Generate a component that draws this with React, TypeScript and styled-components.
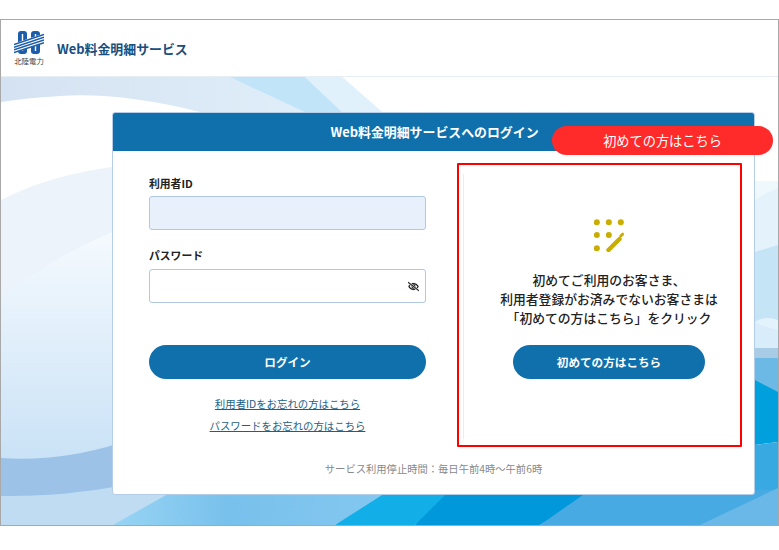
import React from 'react';
import styled, { createGlobalStyle } from 'styled-components';
import { FaRegEyeSlash } from 'react-icons/fa';

const FONT = '"Noto Sans CJK JP", "Noto Sans", sans-serif';

const Global = createGlobalStyle`
  html, body {
    margin: 0;
    background: #fff;
    font-family: ${FONT};
  }
  * {
    box-sizing: border-box;
  }
`;

const LogoMark = () => (
  <svg width="30" height="25" viewBox="0 0 30 25">
    <rect x="4" y="1" width="9" height="23" rx="3" fill="#1b5cab" />
    <rect x="17" y="1" width="9" height="23" rx="3" fill="#1b5cab" />
    <path d="M8.5 4v17M21.5 4v17" stroke="#fff" strokeWidth="1.4" />
    <path d="M0 13.5 30 3.5V13L0 23z" fill="#fff" />
    <g stroke="#1b5cab" strokeWidth="1.5">
      <path d="M0 14.5 30 4.5" />
      <path d="M0 17.2 30 7.2" />
      <path d="M0 19.9 30 9.9" />
      <path d="M0 22.6 30 12.6" />
    </g>
  </svg>
);

const StartIcon = () => (
  <svg width="30" height="33" viewBox="594 219 30 33">
    <g fill="#c9ae00">
      <circle cx="596.8" cy="222.3" r="3" />
      <circle cx="608.8" cy="222.3" r="3" />
      <circle cx="620.8" cy="222.3" r="3" />
      <circle cx="596.8" cy="235" r="3" />
      <circle cx="608.8" cy="235" r="3" />
      <circle cx="596.8" cy="248.3" r="3" />
    </g>
    <path d="M608.5 250 619.5 239" stroke="#c9ae00" strokeWidth="4.4" strokeLinecap="round" />
    <path d="M620.8 236 622.6 234.2" stroke="#c9ae00" strokeWidth="3" strokeLinecap="round" />
  </svg>
);

const Backdrop = () => (
  <BackdropSvg viewBox="1 77 777 448" preserveAspectRatio="none">
    <defs>
      <linearGradient id="topBand" x1="0" x2="1" y1="0" y2="0">
        <stop offset="0" stopColor="#d5e2f2" />
        <stop offset="1" stopColor="#e2f1fb" />
      </linearGradient>
      <linearGradient id="lowerFade" x1="0" x2="0" y1="0" y2="1">
        <stop offset="0" stopColor="#f5fafe" />
        <stop offset="1" stopColor="#c8e1f6" />
      </linearGradient>
      <linearGradient id="midStreak" x1="0" x2="1" y1="0" y2="0">
        <stop offset="0" stopColor="#98d4f4" />
        <stop offset="0.4" stopColor="#78c1ec" />
        <stop offset="1" stopColor="#85c8f0" />
      </linearGradient>
    </defs>
    <rect x="1" y="77" width="777" height="448" fill="#fff" />
    <path d="M1 77H342L382 112H200Q120 92 60 96Q25 98 1 102Z" fill="url(#topBand)" />
    <path d="M230 77H305L342 112H305Z" fill="#c2e4f8" />
    <path d="M305 77H342L382 112H342Z" fill="#e0f1fb" />
    <path d="M1 200Q50 175 112 167V300H1Z" fill="#edf3fa" />
    <path d="M1 298Q50 258 112 232V300H1Z" fill="#e5f0f9" />
    <path d="M1 298Q50 258 112 232H200V470H1Z" fill="url(#lowerFade)" />
    <path d="M1 458Q60 462 120 443L120 490Q60 497 1 496Z" fill="#9cc3e7" />
    <path d="M1 496Q60 497 120 486L200 480V525H1Z" fill="#bfdcf3" />
    <path d="M755 181L778 181V300H755Z" fill="#eef8fd" />
    <path d="M755 200Q765 193 778 188V330H755Z" fill="#e3f2fb" />
    <path d="M755 252L778 245V320Q765 315 755 322Z" fill="#c5e5f7" />
    <path d="M755 322Q765 328 778 330V350H755Z" fill="#d8ecf9" />
    <path d="M755 348H778V360H755Z" fill="#a8cbe6" />
    <path d="M755 358H778V392H755Z" fill="#6db9e6" />
    <path d="M755 380L778 392V442L755 445Z" fill="#00a0dc" />
    <path d="M755 445L778 442V525H755Z" fill="#38a9e1" />
    <path d="M113 525L175 490H400L335 525Z" fill="url(#midStreak)" />
    <path d="M335 525L390 490H460L415 525Z" fill="#12aee8" />
    <path d="M415 525L450 490H600L540 525Z" fill="#0098da" />
    <path d="M540 525L590 490H778V525Z" fill="#48aae2" />
    <path d="M700 525L778 488V525Z" fill="#6ab8e8" />
  </BackdropSvg>
);

export default function App() {
  return (
    <>
      <Global />
      <Frame>
        <Header>
          <Logo>
            <LogoMark />
            <LogoName>北陸電力</LogoName>
          </Logo>
          <ServiceName>Web料金明細サービス</ServiceName>
        </Header>
        <Stage>
          <Backdrop />
          <Card>
            <CardHead>Web料金明細サービスへのログイン</CardHead>
            <CardBody>
              <Form>
                <Label>利用者ID</Label>
                <Input $filled />
                <Label $spaced>パスワード</Label>
                <Input>
                  <FaRegEyeSlash size={11} color="#000" stroke="#000" strokeWidth={20} />
                </Input>
                <LoginButton>ログイン</LoginButton>
                <Links>
                  <ForgotLink>利用者IDをお忘れの方はこちら</ForgotLink>
                  <ForgotLink>パスワードをお忘れの方はこちら</ForgotLink>
                </Links>
              </Form>
              <FirstTime>
                <StartIcon />
                <Lead>
                  初めてご利用のお客さま、
                  <br />
                  利用者登録がお済みでないお客さまは
                  <br />
                  「初めての方はこちら」をクリック
                </Lead>
                <StartButton>初めての方はこちら</StartButton>
              </FirstTime>
            </CardBody>
            <Notice>サービス利用停止時間：毎日午前4時～午前6時</Notice>
            <Highlight />
            <Pill>初めての方はこちら</Pill>
          </Card>
        </Stage>
      </Frame>
    </>
  );
}

const Frame = styled.div`
  width: 779px;
  height: 507px;
  margin-top: 19px;
  border: 1px solid #a8a8a8;
  display: flex;
  flex-direction: column;
`;

const Header = styled.header`
  height: 57px;
  padding-left: 13px;
  background: #fff;
  border-bottom: 1px solid #e6edf5;
  display: flex;
  align-items: center;
  gap: 13px;
`;

const Logo = styled.div`
  width: 30px;
  display: flex;
  flex-direction: column;
  align-items: center;
`;

const LogoName = styled.span`
  margin-top: 1px;
  font-size: 7.4px;
  line-height: 10px;
  color: #444;
  white-space: nowrap;
`;

const ServiceName = styled.div`
  font-size: 12.9px;
  font-weight: 700;
  color: #17507e;
`;

const Stage = styled.main`
  position: relative;
  flex: 1;
  padding: 35px 23px 30px 111px;
`;

const BackdropSvg = styled.svg`
  position: absolute;
  left: 0;
  top: 0;
  width: 100%;
  height: 100%;
`;

const Card = styled.section`
  position: relative;
  height: 383px;
  background: #fff;
  border: 1px solid #b4cde8;
  border-radius: 3px;
  display: flex;
  flex-direction: column;
`;

const CardHead = styled.h1`
  height: 38px;
  margin: 0;
  padding-left: 2px;
  background: #1070ab;
  border-radius: 2px 2px 0 0;
  color: #fff;
  font-size: 12.9px;
  font-weight: 700;
  line-height: 38px;
  text-align: center;
`;

const CardBody = styled.div`
  padding: 23px 0 0 36px;
  display: flex;
  gap: 37px;
`;

const Form = styled.div`
  width: 277px;
  display: flex;
  flex-direction: column;
`;

const Label = styled.div<{ $spaced?: boolean }>`
  margin-top: ${(p) => (p.$spaced ? '16px' : '0')};
  margin-bottom: ${(p) => (p.$spaced ? '5px' : '4px')};
  font-size: 10.8px;
  font-weight: 700;
  line-height: 18px;
  color: #222;
`;

const Input = styled.div<{ $filled?: boolean }>`
  height: 34px;
  padding-right: 6px;
  background: ${(p) => (p.$filled ? '#e8f0fc' : '#fff')};
  border: 1px solid #b0c8e4;
  border-radius: 3px;
  display: flex;
  align-items: center;
  justify-content: flex-end;
`;

const PrimaryButton = styled.button`
  height: 34px;
  padding: 0;
  border: 0;
  border-radius: 17px;
  background: #1070ab;
  color: #fff;
  font-family: ${FONT};
  font-size: 11.6px;
  font-weight: 700;
`;

const LoginButton = styled(PrimaryButton)`
  margin-top: 42px;
`;

const StartButton = styled(PrimaryButton)`
  width: 192px;
  margin-top: 18px;
`;

const Links = styled.div`
  margin-top: 14px;
  display: flex;
  flex-direction: column;
  align-items: center;
`;

const ForgotLink = styled.a`
  font-size: 10.4px;
  line-height: 22px;
  color: #1d5f85;
  text-decoration: underline;
`;

const FirstTime = styled.div`
  flex: 1;
  height: 265px;
  padding-top: 45px;
  border-left: 1px solid #e8eef5;
  display: flex;
  flex-direction: column;
  align-items: center;
`;

const Lead = styled.p`
  margin: 18px 0 0;
  font-size: 12.8px;
  font-weight: 500;
  line-height: 19px;
  text-align: center;
  color: #222;
`;

const Notice = styled.div`
  margin-top: 21px;
  font-size: 10.3px;
  line-height: 18px;
  text-align: center;
  color: #888;
`;

const Highlight = styled.div`
  position: absolute;
  left: 344px;
  top: 50px;
  width: 285px;
  height: 284px;
  border: 2px solid #f00;
  border-radius: 1px;
`;

const Pill = styled.div`
  position: absolute;
  left: 439px;
  top: 13px;
  width: 221px;
  height: 29px;
  border-radius: 15px;
  background: #ff2a2a;
  color: #fff;
  font-size: 13.2px;
  line-height: 29px;
  text-align: center;
`;
